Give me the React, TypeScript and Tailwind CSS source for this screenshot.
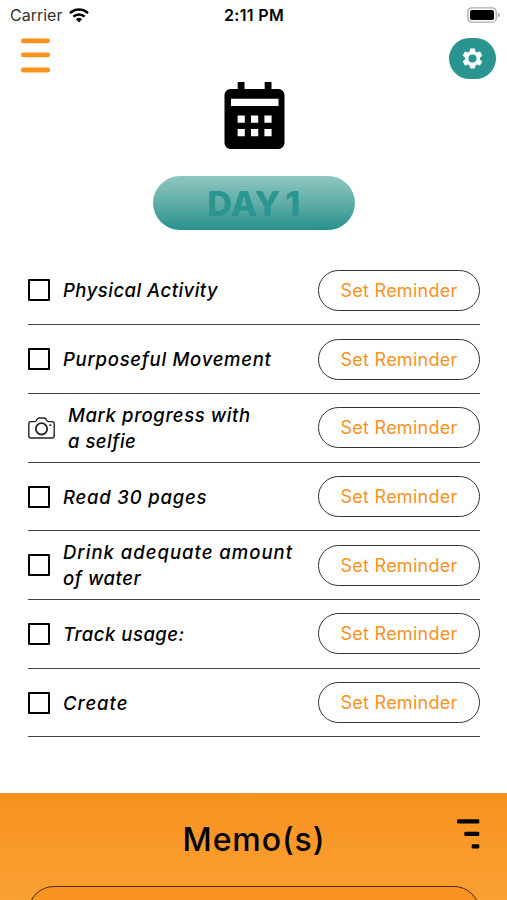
import { useState } from 'react';
import { clsx } from 'clsx';

type Task = {
  id: string;
  lines: { text: string; tracking: string }[];
  photo?: boolean;
};

const TASKS: Task[] = [
  { id: 'activity', lines: [{ text: 'Physical Activity', tracking: 'tracking-[0.48px]' }] },
  { id: 'movement', lines: [{ text: 'Purposeful Movement', tracking: 'tracking-[0.72px]' }] },
  {
    id: 'selfie',
    photo: true,
    lines: [
      { text: 'Mark progress with', tracking: 'tracking-[0.6px]' },
      { text: 'a selfie', tracking: 'tracking-[0.5px]' },
    ],
  },
  { id: 'read', lines: [{ text: 'Read 30 pages', tracking: 'tracking-[0.8px]' }] },
  {
    id: 'water',
    lines: [
      { text: 'Drink adequate amount', tracking: 'tracking-[1px]' },
      { text: 'of water', tracking: 'tracking-[0.55px]' },
    ],
  },
  { id: 'usage', lines: [{ text: 'Track usage:', tracking: 'tracking-[0.5px]' }] },
  { id: 'create', lines: [{ text: 'Create', tracking: 'tracking-[1px]' }] },
];

export default function App() {
  return (
    <div className="flex h-[900px] w-[507px] flex-col overflow-hidden bg-white font-['Inter',sans-serif] text-black">
      <StatusBar />

      <header className="flex h-[52px] shrink-0 items-start justify-between pt-2 pr-[11px] pl-[21px]">
        <button type="button" aria-label="Menu">
          <svg width="29" height="35" viewBox="0 0 29 35" className="block" fill="#f7931e">
            <rect x="0" y="0.5" width="29" height="4.8" rx="2.2" />
            <rect x="0" y="14.4" width="29" height="4.8" rx="2.2" />
            <rect x="0" y="29.6" width="29" height="4.8" rx="2.2" />
          </svg>
        </button>
        <button
          type="button"
          aria-label="Settings"
          className="flex h-[41px] w-[47px] items-center justify-center rounded-[20.5px] bg-[#2a9590]"
        >
          <svg width="25" height="25" viewBox="0 0 24 24" fill="#fff">
            <path d="M19.14 12.94c.04-.3.06-.61.06-.94 0-.32-.02-.64-.07-.94l2.03-1.58a.49.49 0 0 0 .12-.61l-1.92-3.32a.488.488 0 0 0-.59-.22l-2.39.96c-.5-.38-1.03-.7-1.62-.94l-.36-2.54a.484.484 0 0 0-.48-.41h-3.84c-.24 0-.43.17-.47.41l-.36 2.54c-.59.24-1.13.57-1.62.94l-2.39-.96c-.22-.08-.47 0-.59.22L2.74 8.87c-.12.21-.08.47.12.61l2.03 1.58c-.05.3-.09.63-.09.94s.02.64.07.94l-2.03 1.58a.49.49 0 0 0-.12.61l1.92 3.32c.12.22.37.29.59.22l2.39-.96c.5.38 1.03.7 1.62.94l.36 2.54c.05.24.24.41.48.41h3.84c.24 0 .44-.17.47-.41l.36-2.54c.59-.24 1.13-.56 1.62-.94l2.39.96c.22.08.47 0 .59-.22l1.92-3.32c.12-.22.07-.47-.12-.61l-2.01-1.58zM12 15.9a3.9 3.9 0 1 1 0-7.8 3.9 3.9 0 0 1 0 7.800z" />
          </svg>
        </button>
      </header>

      <section className="flex shrink-0 flex-col items-center pl-px">
        <CalendarIcon />
        <div className="mt-[27px] flex h-[54px] w-[202px] items-center justify-center rounded-full bg-linear-to-b from-[#8fc7c1] to-[#24928d] pt-[2px]">
          <h1 className="text-[34px] leading-none font-extrabold tracking-[0.4px] [word-spacing:-3px] text-[#2b9691]">
            DAY 1
          </h1>
        </div>
      </section>

      <ul className="mt-[26.6px] flex shrink-0 flex-col pr-[27px] pl-[28px]">
        {TASKS.map((task) => (
          <TaskRow key={task.id} task={task} />
        ))}
      </ul>

      <section className="mt-auto h-[107px] shrink-0 bg-linear-to-b from-[#f7931e] to-[#fb9f33] pr-[27px] pl-[28px]">
        <div className="grid h-[93px] grid-cols-[1fr_auto_1fr] items-center">
          <h2 className="col-start-2 text-[32px] leading-none font-medium tracking-[0.9px]">Memo(s)</h2>
          <button type="button" aria-label="Filter memos" className="-mt-[12px] justify-self-end">
            <svg width="23" height="30" viewBox="0 0 23 30" className="block">
              <rect x="0" y="0.3" width="22.300" height="4.200" rx="1.200" />
              <rect x="7.300" y="12.700" width="15" height="4.200" rx="1.200" />
              <rect x="14.700" y="25.200" width="7.600" height="4.200" rx="1.200" />
            </svg>
          </button>
        </div>
        <div className="h-[52px] rounded-[26px] border-[1.5px] border-[#4a2a05] bg-[#f7931e]" />
      </section>
    </div>
  );
}

function StatusBar() {
  return (
    <div className="grid h-[30px] shrink-0 grid-cols-3 items-center pr-[7px] pl-[10px]">
      <div className="flex items-center gap-[7px]">
        <span className="text-[16px] leading-none text-[#333]">Carrier</span>
        <svg width="20" height="15" viewBox="0 0 20 15" className="block">
          <g fill="none" stroke="#000" strokeWidth="2.5">
            <path d="M1 5.100a12.800 12.800 0 0 1 18 0" />
            <path d="M4.400 8.700a8 8 0 0 1 11.200 0" />
          </g>
          <path d="M6.900 11.300a4.500 4.500 0 0 1 6.200 0L10 14.400z" />
        </svg>
      </div>
      <span className="pr-[2px] text-center text-[16px] leading-none font-semibold tracking-[0.35px] whitespace-nowrap">
        2:11 PM
      </span>
      <svg width="33" height="16" viewBox="0 0 33 16" className="block justify-self-end">
        <rect x="0.800" y="0.800" width="28.400" height="14.400" rx="4" fill="#fff" stroke="#aaa" strokeWidth="1.300" />
        <rect x="3" y="3" width="24" height="10" rx="1.800" />
        <path d="M30.800 5.500q2 .6 2 2.500t-2 2.500z" fill="#aaa" />
      </svg>
    </div>
  );
}

function CalendarIcon() {
  return (
    <svg width="61" height="67" viewBox="0 0 61 67" className="block">
      <path
        fillRule="evenodd"
        d="M13.700 0h6.800v7h20.200V0h6.800v7H54.500a6 6 0 0 1 6 6v48a6 6 0 0 1-6 6H6.500a6 6 0 0 1-6-6V13a6 6 0 0 1 6-6h7.200zM7 16.800v7.200h47.500v-7.200zM13.600 33.500v7.200h7.200v-7.200zM27 33.500v7.200h7.200v-7.200zM40.400 33.500v7.200h7.200v-7.200zM13.600 47v7.200h7.200V47zM27 47v7.200h7.200V47zM40.400 47v7.200h7.200V47z"
      />
    </svg>
  );
}

function CameraIcon() {
  return (
    <svg width="27" height="22" viewBox="0 0 27 22" className="block" fill="none" stroke="#222" strokeWidth="1.4">
      <path d="M3 4.600h3.900c.9 0 1.200-.5 1.600-1.400.5-1.400 1.200-2.200 2.700-2.200h4.800c1.500 0 2.200.8 2.700 2.200.4.900.7 1.400 1.600 1.400H24c1.400 0 2.200.8 2.200 2.200v12c0 1.400-.8 2.200-2.200 2.200H3c-1.400 0-2.200-.8-2.200-2.200v-12c0-1.400.8-2.200 2.200-2.200z" />
      <circle cx="13.500" cy="11.800" r="5.700" strokeWidth="1.800" />
      <path d="M21.300 8.200h2" strokeWidth="1.600" />
    </svg>
  );
}

function TaskRow({ task }: { task: Task }) {
  const [done, setDone] = useState(false);

  return (
    <li className="flex h-[68.7px] items-center border-b-[1.5px] border-[#444]">
      {task.photo ? (
        <CameraIcon />
      ) : (
        <button
          type="button"
          role="checkbox"
          aria-checked={done}
          aria-label={task.lines.map((l) => l.text).join(' ')}
          onClick={() => setDone((v) => !v)}
          className={clsx('size-[22px] rounded-[1px] border-[2.5px] border-black', done && 'bg-black')}
        />
      )}
      <p className="ml-[13px] flex-1 text-[18.5px] leading-[26px] font-medium italic">
        {task.lines.map((line) => (
          <span key={line.text} className={clsx('block whitespace-nowrap', line.tracking)}>
            {line.text}
          </span>
        ))}
      </p>
      <button
        type="button"
        className="flex h-[41px] w-[162px] items-center justify-center rounded-full border-[1.5px] border-[#333] pt-px text-[18px] leading-none tracking-[0.25px] text-[#f7931e]"
      >
        Set Reminder
      </button>
    </li>
  );
}
